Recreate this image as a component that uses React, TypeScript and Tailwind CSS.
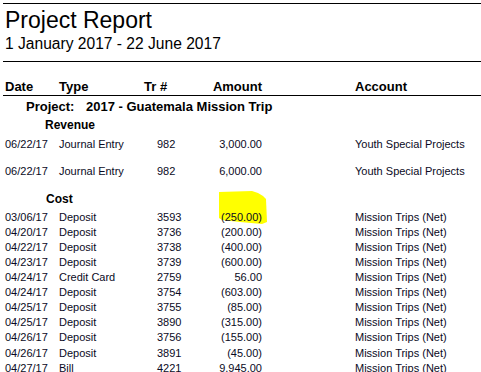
const revenue = [
  { date: "06/22/17", type: "Journal Entry", tr: "982", amount: "3,000.00", account: "Youth Special Projects" },
  { date: "06/22/17", type: "Journal Entry", tr: "982", amount: "6,000.00", account: "Youth Special Projects" },
];

const cost = [
  { date: "03/06/17", type: "Deposit", tr: "3593", amount: "(250.00)" },
  { date: "04/20/17", type: "Deposit", tr: "3736", amount: "(200.00)" },
  { date: "04/22/17", type: "Deposit", tr: "3738", amount: "(400.00)" },
  { date: "04/23/17", type: "Deposit", tr: "3739", amount: "(600.00)" },
  { date: "04/24/17", type: "Credit Card", tr: "2759", amount: "56.00" },
  { date: "04/24/17", type: "Deposit", tr: "3754", amount: "(603.00)" },
  { date: "04/25/17", type: "Deposit", tr: "3755", amount: "(85.00)" },
  { date: "04/25/17", type: "Deposit", tr: "3890", amount: "(315.00)" },
  { date: "04/26/17", type: "Deposit", tr: "3756", amount: "(155.00)" },
  { date: "04/26/17", type: "Deposit", tr: "3891", amount: "(45.00)" },
  { date: "04/27/17", type: "Bill", tr: "4221", amount: "9,945.00" },
];

type Row = { date: string; type: string; tr: string; amount: string; account?: string };

const DataRow = ({ row, tall }: { row: Row; tall?: boolean }) => (
  <div className={`flex pl-[5px] text-[11px] ${tall ? "h-[27px] leading-[13px]" : "h-[15px] leading-[15px]"}`}>
    <div className="w-[54px]">{row.date}</div>
    <div className="w-[98px]">{row.type}</div>
    <div className="w-[43px]">{row.tr}</div>
    <div className="w-[62px] text-right">{row.amount}</div>
    <div className="pl-[93px] whitespace-nowrap">{row.account ?? "Mission Trips (Net)"}</div>
  </div>
);

export default function App() {
  return (
    <div
      className="relative w-[481px] h-[372px] overflow-hidden bg-white text-[#0a0a24]"
      style={{ fontFamily: '"Liberation Sans", Arial, sans-serif' }}
    >
      {/* highlighter mark */}
      <svg className="absolute left-0 top-0" width="481" height="372">
        <polygon
          points="219,192 252,191 258,193 263,196 266,199 267,222 262,224 240,222 222,220 219,218"
          fill="#ffff00"
        />
      </svg>

      <div className="relative pt-[3px] pl-[3px]">
        <div className="border-t border-black" />
        <div className="pl-[2px] pt-[2px] text-[23px] leading-[28px] text-black">Project Report</div>
        <div className="pl-[2px] text-[15.6px] leading-[20px] text-black">1 January 2017 - 22 June 2017</div>
        <div className="mt-[7px] border-t border-black" />

        <div className="mt-[17px] -ml-[3px] flex h-[16px] pl-[5px] text-[13px] font-bold leading-[16px] text-black">
          <div className="w-[54px]">Date</div>
          <div className="w-[85px]">Type</div>
          <div className="w-[50px]">Tr #</div>
          <div className="w-[68px] text-right">Amount</div>
          <div className="pl-[93px]">Account</div>
        </div>
        <div className="border-t border-black" />
      </div>

      <div className="relative">
        <div className="mt-[3px] flex pl-[26px] text-[13px] font-bold leading-[16px] text-black">
          <div className="w-[60px]">Project:</div>
          <div>2017 - Guatemala Mission Trip</div>
        </div>

        <div className="mt-[3px] pl-[45px] text-[12px] font-bold leading-[14px] text-black">Revenue</div>
        <div className="mt-[6px]">
          {revenue.map((r, i) => (
            <DataRow key={i} row={r} tall />
          ))}
        </div>

        <div className="pl-[46px] text-[12px] font-bold leading-[14px] text-black">Cost</div>
        <div className="mt-[4px]">
          {cost.map((r, i) => (
            <div key={i} className={i === 9 ? "mt-[1px]" : ""}>
              <DataRow row={r} />
            </div>
          ))}
        </div>
      </div>
    </div>
  );
}
